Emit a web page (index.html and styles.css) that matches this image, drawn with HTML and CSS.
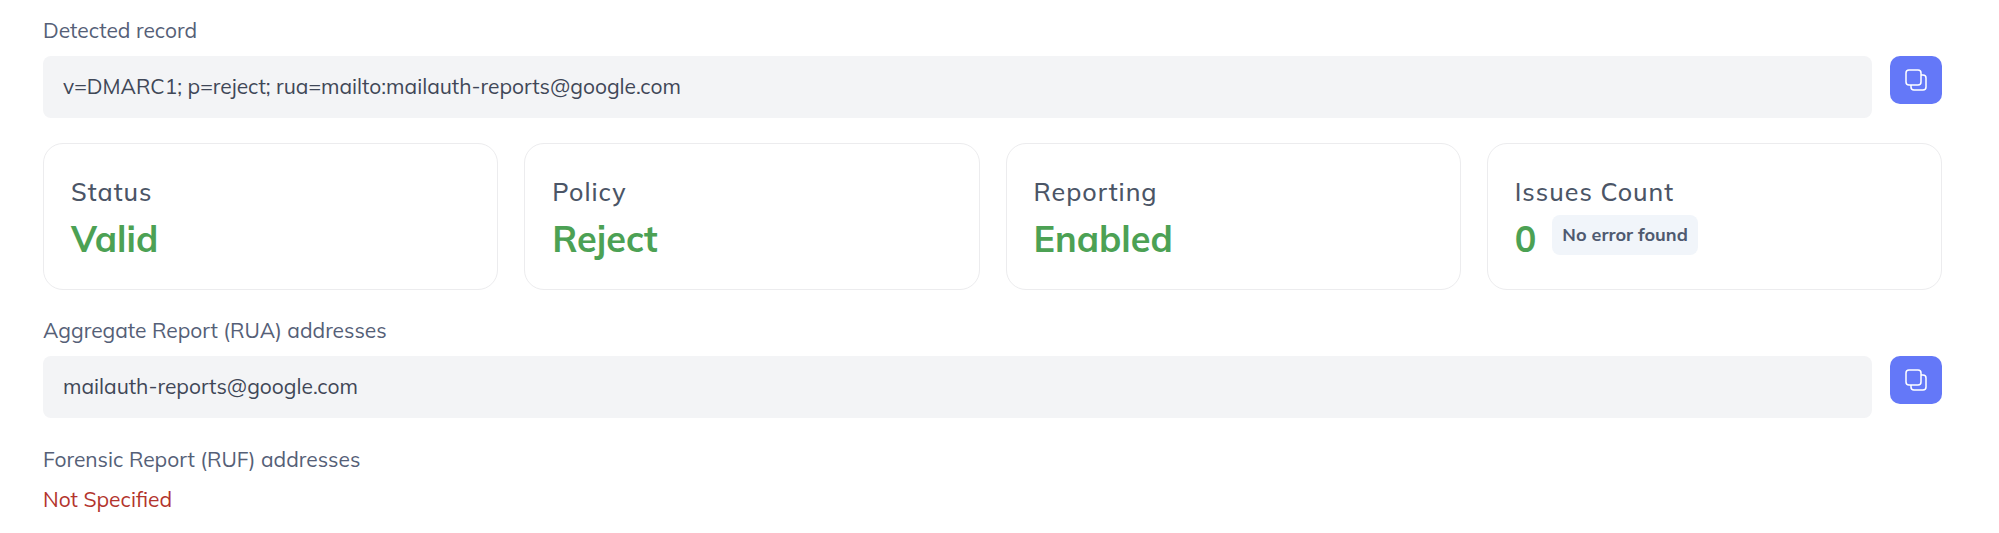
FILE: index.html
```html
<!DOCTYPE html>
<html lang="en">
<head>
    <meta charset="UTF-8">
    <meta name="viewport" content="width=device-width, initial-scale=1.0">
    <title>DMARC Record</title>
    <link rel="stylesheet" href="styles.css">
</head>
<body>
    <main class="report">
        <!-- Record -->
        <div class="field">
            <label class="field-label" for="record">Detected record</label>
            <div class="field-row">
                <input type="text" id="record" class="field-value" value="v=DMARC1; p=reject; rua=mailto:mailauth-reports@google.com" readonly>
                <button type="button" class="copy-btn" data-copy="record" aria-label="Copy">
                    <svg class="copy-icon" viewBox="0 0 24 24" fill="none" stroke="currentColor" stroke-width="1.5">
                        <rect x="2" y="2" width="15" height="15" rx="3"/>
                        <path d="M17 7h2a3 3 0 0 1 3 3v9a3 3 0 0 1-3 3h-9a3 3 0 0 1-3-3v-2"/>
                    </svg>
                </button>
            </div>
        </div>

        <!-- Summary cards -->
        <div class="cards">
            <div class="card">
                <div class="card-title">Status</div>
                <div class="card-value">Valid</div>
            </div>
            <div class="card">
                <div class="card-title">Policy</div>
                <div class="card-value">Reject</div>
            </div>
            <div class="card">
                <div class="card-title">Reporting</div>
                <div class="card-value">Enabled</div>
            </div>
            <div class="card">
                <div class="card-title">Issues Count</div>
                <div class="card-line">
                    <div class="card-value">0</div>
                    <span class="tag">No error found</span>
                </div>
            </div>
        </div>

        <!-- Report addresses -->
        <div class="field">
            <label class="field-label" for="rua">Aggregate Report (RUA) addresses</label>
            <div class="field-row">
                <input type="text" id="rua" class="field-value" value="mailauth-reports@google.com" readonly>
                <button type="button" class="copy-btn" data-copy="rua" aria-label="Copy">
                    <svg class="copy-icon" viewBox="0 0 24 24" fill="none" stroke="currentColor" stroke-width="1.5">
                        <rect x="2" y="2" width="15" height="15" rx="3"/>
                        <path d="M17 7h2a3 3 0 0 1 3 3v9a3 3 0 0 1-3 3h-9a3 3 0 0 1-3-3v-2"/>
                    </svg>
                </button>
            </div>
        </div>

        <div class="field">
            <div class="field-label">Forensic Report (RUF) addresses</div>
            <div class="missing">Not Specified</div>
        </div>
    </main>

    <script>
        document.querySelectorAll('.copy-btn').forEach(btn => {
            btn.addEventListener('click', function() {
                navigator.clipboard.writeText(document.getElementById(btn.dataset.copy).value);
            });
        });
    </script>
</body>
</html>
```
FILE: styles.css
```css
body {
    margin: 0;
    background-color: #fff;
    color: #4b5566;
    font-family: Mulish, Lato, sans-serif;
    font-size: 21px;
    line-height: 26px;
}
.report {
    padding: 17px 57px 16px 43px;
}
.field {
    display: flex;
    flex-direction: column;
    gap: 13px;
}
.field + .field {
    margin-top: 28px;
}
.field-label {
    color: #556077;
}
.field-row {
    display: flex;
    align-items: flex-start;
    gap: 18px;
}
.field-value {
    flex: 1;
    min-width: 0;
    box-sizing: border-box;
    padding: 17px 20px 19px;
    border: none;
    border-radius: 8px;
    background-color: #f3f4f6;
    color: #3f4757;
    font: inherit;
}
.copy-btn {
    display: flex;
    align-items: center;
    justify-content: center;
    width: 52px;
    height: 48px;
    padding: 0;
    border: none;
    border-radius: 10px;
    background-color: #6478f8;
    color: #fff;
    cursor: pointer;
}
.copy-btn:hover {
    background-color: #5468e8;
}
.copy-icon {
    width: 24px;
    height: 24px;
}
.cards {
    display: grid;
    grid-template-columns: repeat(4, 1fr);
    gap: 26px;
    margin: 25px 0 27px;
}
.card {
    padding: 32px 28px 26px 27px;
    border: 1px solid #ececee;
    border-radius: 20px;
}
.card-title {
    margin-bottom: 7px;
    font-size: 25px;
    line-height: 32px;
    font-weight: 500;
    letter-spacing: 1px;
}
.card-line {
    display: flex;
    align-items: flex-start;
    gap: 16px;
}
.card-value {
    color: #4ca154;
    font-size: 36px;
    line-height: 48px;
    font-weight: 700;
}
.tag {
    padding: 7px 10px;
    border-radius: 8px;
    background-color: #f1f5fa;
    color: #4f5a70;
    font-size: 18px;
    font-weight: 700;
}
.missing {
    color: #b3342d;
    line-height: 28px;
}
```
